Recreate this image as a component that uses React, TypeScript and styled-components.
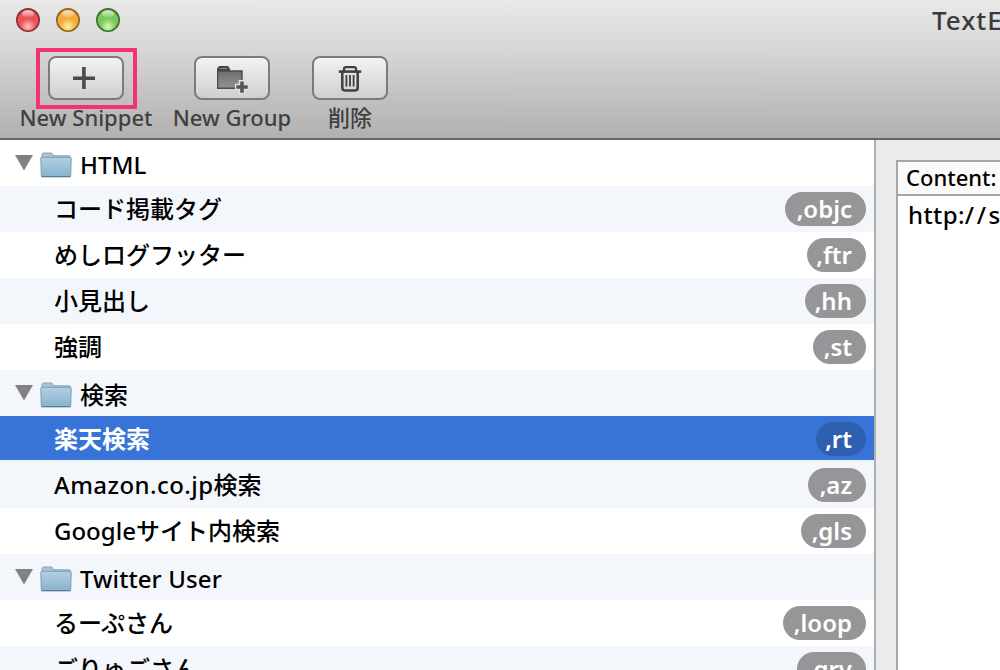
import React from "react";
import styled, { createGlobalStyle } from "styled-components";

const GlobalStyle = createGlobalStyle`
  * { box-sizing: border-box; }
  body {
    margin: 0;
    overflow: hidden;
    font-family: "Noto Sans", "Noto Sans CJK JP", sans-serif;
    font-size: 24px;
    color: #000;
  }
`;

const Window = styled.div`
  width: 1000px;
  height: 670px;
  display: flex;
  flex-direction: column;
  overflow: hidden;
  background: #ebebeb;
`;

const Header = styled.header`
  height: 140px;
  flex: none;
  position: relative;
  overflow: hidden;
  border-bottom: 2px solid #676767;
  background: linear-gradient(#e9e9e9 0, #d0d0d0 65px, #b0b0b0 138px);
`;

const TitleBar = styled.div`
  height: 56px;
  display: flex;
  justify-content: space-between;
  padding: 7px 0 0 15px;
`;

const Lights = styled.div`
  display: flex;
  gap: 14px;
`;

const Light = styled.svg`
  display: block;
  width: 26px;
  height: 26px;
`;

const Title = styled.h1`
  margin: -7px 0 0;
  width: 68px;
  overflow: hidden;
  white-space: nowrap;
  font-weight: 500;
  font-size: 26px;
  line-height: 41px;
  letter-spacing: 1px;
  color: #3a3a3e;
`;

const Tools = styled.div`
  display: flex;
  gap: 21px;
  padding-left: 20px;
`;

const Tool = styled.div<{ $width: number }>`
  width: ${(p) => p.$width}px;
  display: flex;
  flex-direction: column;
  align-items: center;
`;

const ToolButton = styled.button`
  width: 76px;
  height: 44px;
  padding: 0;
  display: flex;
  align-items: center;
  justify-content: center;
  border: 2px solid #7b7b7b;
  border-radius: 8px;
  background: linear-gradient(#f2f2f2, #cfcfcf);
  svg { display: block; }
`;

const ToolLabel = styled.span`
  font-size: 22px;
  font-weight: 500;
  line-height: 35px;
  white-space: nowrap;
  color: #404040;
`;

const Highlight = styled.div`
  position: absolute;
  left: 36px;
  top: 48px;
  width: 101px;
  height: 61px;
  border: 4px solid #f2336f;
  border-radius: 1px;
`;

const Body = styled.div`
  flex: 1;
  min-height: 0;
  display: flex;
`;

const List = styled.div`
  width: 876px;
  flex: none;
  overflow: hidden;
  border-right: 2px solid #adafb1;
  background: #fff;
`;

const rowBack = (shade?: boolean) => (shade ? "#f3f6fa" : "#fff");

const GroupRow = styled.div<{ $shade?: boolean }>`
  height: 46px;
  display: flex;
  padding-left: 15px;
  background: ${(p) => rowBack(p.$shade)};
`;

const Arrow = styled.svg`
  width: 18px;
  height: 16px;
  margin: 15px 7px 0 0;
`;

const Folder = styled.svg`
  width: 32px;
  height: 26px;
  margin: 12px 8px 0 0;
`;

const GroupName = styled.span`
  font-weight: 500;
  line-height: 50px;
`;

const ItemRow = styled.div<{ $shade?: boolean; $selected?: boolean }>`
  height: 46px;
  display: flex;
  justify-content: space-between;
  padding: 0 8px 0 54px;
  border-bottom: ${(p) => (p.$selected ? "2px solid #e9f6fb" : "0")};
  background: ${(p) => (p.$selected ? "#3874d7" : rowBack(p.$shade))};
  color: ${(p) => (p.$selected ? "#fff" : "#000")};
  font-weight: ${(p) => (p.$selected ? 700 : 500)};
`;

const ItemName = styled.span`
  line-height: 45px;
  white-space: nowrap;
`;

const Latin = styled.span<{ $spacing: number }>`
  letter-spacing: ${(p) => p.$spacing}px;
`;

const Pill = styled.span<{ $width: number; $selected?: boolean }>`
  width: ${(p) => p.$width}px;
  height: 34px;
  margin-top: 6px;
  padding-right: 14px;
  border-radius: 17px;
  text-align: right;
  line-height: 34px;
  font-weight: 600;
  color: #fff;
  white-space: nowrap;
  background: ${(p) => (p.$selected ? "#2e5fb0" : "#969698")};
`;

const Detail = styled.main`
  flex: 1;
  min-width: 0;
  padding: 20px 0 0 20px;
`;

const Editor = styled.section`
  height: 100%;
  overflow: hidden;
  border: 2px solid #a6a6a6;
  border-width: 2px 0 0 2px;
  background: #fff;
`;

const EditorHead = styled.div`
  height: 34px;
  padding-left: 8px;
  line-height: 31px;
  font-size: 22px;
  font-weight: 500;
  white-space: nowrap;
  border-bottom: 2px solid #a6a6a6;
  background: #fafafa;
`;

const EditorText = styled.div`
  padding-left: 10px;
  line-height: 37px;
  font-weight: 500;
  white-space: nowrap;
`;

type LightColors = { id: string; rim: string; top: string; mid: string; glow: string };

const lights: LightColors[] = [
  { id: "close", rim: "#8c3030", top: "#b93a3c", mid: "#ea5254", glow: "#ffc4bd" },
  { id: "minimize", rim: "#93621b", top: "#c98426", mid: "#f0ac40", glow: "#fff2a0" },
  { id: "zoom", rim: "#3d6f2c", top: "#4f9639", mid: "#7cc75e", glow: "#d6fbb0" },
];

const TrafficLight = ({ id, rim, top, mid, glow }: LightColors) => (
  <Light viewBox="0 0 26 26">
    <defs>
      <radialGradient id={id} cx="0.5" cy="0.8" r="0.8">
        <stop offset="0" stopColor={glow} />
        <stop offset="0.45" stopColor={mid} />
        <stop offset="0.75" stopColor={mid} />
        <stop offset="1" stopColor={top} />
      </radialGradient>
      <linearGradient id={`${id}-shine`} x1="0" y1="0" x2="0" y2="1">
        <stop offset="0" stopColor="#fff" stopOpacity="0.75" />
        <stop offset="1" stopColor="#fff" stopOpacity="0.1" />
      </linearGradient>
    </defs>
    <circle cx="13" cy="13.8" r="11.8" fill="#fff" opacity="0.4" />
    <circle cx="13" cy="13" r="11.2" fill={`url(#${id})`} stroke={rim} strokeWidth="1.6" />
    <ellipse cx="13" cy="6.8" rx="6.2" ry="3.6" fill={`url(#${id}-shine)`} />
  </Light>
);

const PlusIcon = () => (
  <svg width="28" height="24" viewBox="0 0 28 24">
    <path d="M10.1 1h3.6v9.4H23V14h-9.3v9h-3.6v-9H1v-3.600h9.100z" fill="#4a4a4a" />
  </svg>
);

const NewGroupIcon = () => (
  <svg width="34" height="32" viewBox="0 0 34 32">
    <defs>
      <linearGradient id="group-fill" x1="0" y1="0" x2="0" y2="1">
        <stop offset="0" stopColor="#6e6e6e" />
        <stop offset="1" stopColor="#929292" />
      </linearGradient>
    </defs>
    <path d="M2 9V6.400L4.200 4h8.600L15 6.400V9z" fill="#454545" />
    <path d="M2.700 9H27v17.300H2.700z" fill="url(#group-fill)" stroke="#4c4c4c" strokeWidth="1.400" />
    <path d="M4.500 6.500h7.500" stroke="#8a8a8a" strokeWidth="1" />
    <path d="M23.700 18H30.300v3.700H34v6.600h-3.700V32h-6.600v-3.700H20v-6.600h3.700z" fill="#e0e0e0" />
    <path d="M25.200 19.500h3.600v3.700h3.900v3.600h-3.900v3.900h-3.600v-3.900h-3.900v-3.600h3.900z" fill="#555" />
  </svg>
);

const TrashIcon = () => (
  <svg width="24" height="27" viewBox="0 0 24 27" fill="none" stroke="#404040">
    <path d="M.800 6.600h22.400" strokeWidth="2.600" />
    <path d="M6 6V4q0-1.900 1.900-1.900h8.200Q18 2.100 18 4v2" strokeWidth="2.300" />
    <path d="M4.300 7v15.800q0 2.600 2.600 2.600h10.200q2.600 0 2.600-2.600V7" strokeWidth="2.500" />
    <path d="M8.400 10v11.500M12 10v11.500M15.600 10v11.500" strokeWidth="1.800" />
  </svg>
);

const FolderIcon = () => (
  <Folder viewBox="0 0 32 26">
    <defs>
      <linearGradient id="folder-fill" x1="0" y1="0" x2="0" y2="1">
        <stop offset="0" stopColor="#b1d0e3" />
        <stop offset="1" stopColor="#88b2ce" />
      </linearGradient>
    </defs>
    <path d="M2 6V2.800Q2 1 3.800 1h7.400q1.300 0 1.800 1.500l.5 1.300H29q1.500 0 1.500 1.500V8H2z" fill="#a9c3d4" stroke="#8ca5b5" strokeWidth="1" />
    <path d="M.8 6.200q0-.9 1-.9h28.400q1 0 1 .9l-.5 17.200q0 1.300-1.200 1.300h-27q-1.200 0-1.200-1.300z" fill="url(#folder-fill)" stroke="#7b9cb0" strokeWidth="1" />
    <path d="M1.500 24.600h29" stroke="#5c7d92" strokeWidth="1.200" />
  </Folder>
);

const Disclosure = () => (
  <Arrow viewBox="0 0 18 16">
    <path d="M0 0h18L9 15.500z" fill="#818181" />
  </Arrow>
);

type Group = { kind: "group"; latin?: string; spacing?: number; text?: string };
type Item = {
  kind: "item";
  latin?: string;
  spacing?: number;
  text: string;
  key: string;
  width: number;
  selected?: boolean;
};

const rows: (Group | Item)[] = [
  { kind: "group", latin: "HTML", spacing: 0 },
  { kind: "item", text: "コード掲載タグ", key: ",objc", width: 81 },
  { kind: "item", text: "めしログフッター", key: ",ftr", width: 59 },
  { kind: "item", text: "小見出し", key: ",hh", width: 61 },
  { kind: "item", text: "強調", key: ",st", width: 53 },
  { kind: "group", text: "検索" },
  { kind: "item", text: "楽天検索", key: ",rt", width: 50, selected: true },
  { kind: "item", latin: "Amazon.co.jp", spacing: 0.45, text: "検索", key: ",az", width: 58 },
  { kind: "item", latin: "Google", spacing: 0, text: "サイト内検索", key: ",gls", width: 65 },
  { kind: "group", latin: "Twitter User", spacing: 0.1 },
  { kind: "item", text: "るーぷさん", key: ",loop", width: 83 },
  { kind: "item", text: "ごりゅごさん", key: ",grv", width: 69 },
];

export default function App() {
  return (
    <Window>
      <GlobalStyle />
      <Header>
        <TitleBar>
          <Lights>
            {lights.map((l) => (
              <TrafficLight {...l} key={l.id} />
            ))}
          </Lights>
          <Title>TextE</Title>
        </TitleBar>
        <Tools>
          <Tool $width={132}>
            <ToolButton><PlusIcon /></ToolButton>
            <ToolLabel>New Snippet</ToolLabel>
          </Tool>
          <Tool $width={118}>
            <ToolButton><NewGroupIcon /></ToolButton>
            <ToolLabel>New Group</ToolLabel>
          </Tool>
          <Tool $width={76}>
            <ToolButton><TrashIcon /></ToolButton>
            <ToolLabel>削除</ToolLabel>
          </Tool>
        </Tools>
        <Highlight />
      </Header>
      <Body>
        <List>
          {rows.map((row, i) =>
            row.kind === "group" ? (
              <GroupRow key={i} $shade={i % 2 === 1}>
                <Disclosure />
                <FolderIcon />
                <GroupName>
                  {row.latin && <Latin $spacing={row.spacing ?? 0}>{row.latin}</Latin>}
                  {row.text}
                </GroupName>
              </GroupRow>
            ) : (
              <ItemRow key={i} $shade={i % 2 === 1} $selected={row.selected}>
                <ItemName>
                  {row.latin && <Latin $spacing={row.spacing ?? 0}>{row.latin}</Latin>}
                  {row.text}
                </ItemName>
                <Pill $width={row.width} $selected={row.selected}>{row.key}</Pill>
              </ItemRow>
            )
          )}
        </List>
        <Detail>
          <Editor>
            <EditorHead>Content:</EditorHead>
            <EditorText>
              <Latin $spacing={0.4}>http:</Latin>
              <Latin $spacing={2.6}>//</Latin>s
            </EditorText>
          </Editor>
        </Detail>
      </Body>
    </Window>
  );
}
